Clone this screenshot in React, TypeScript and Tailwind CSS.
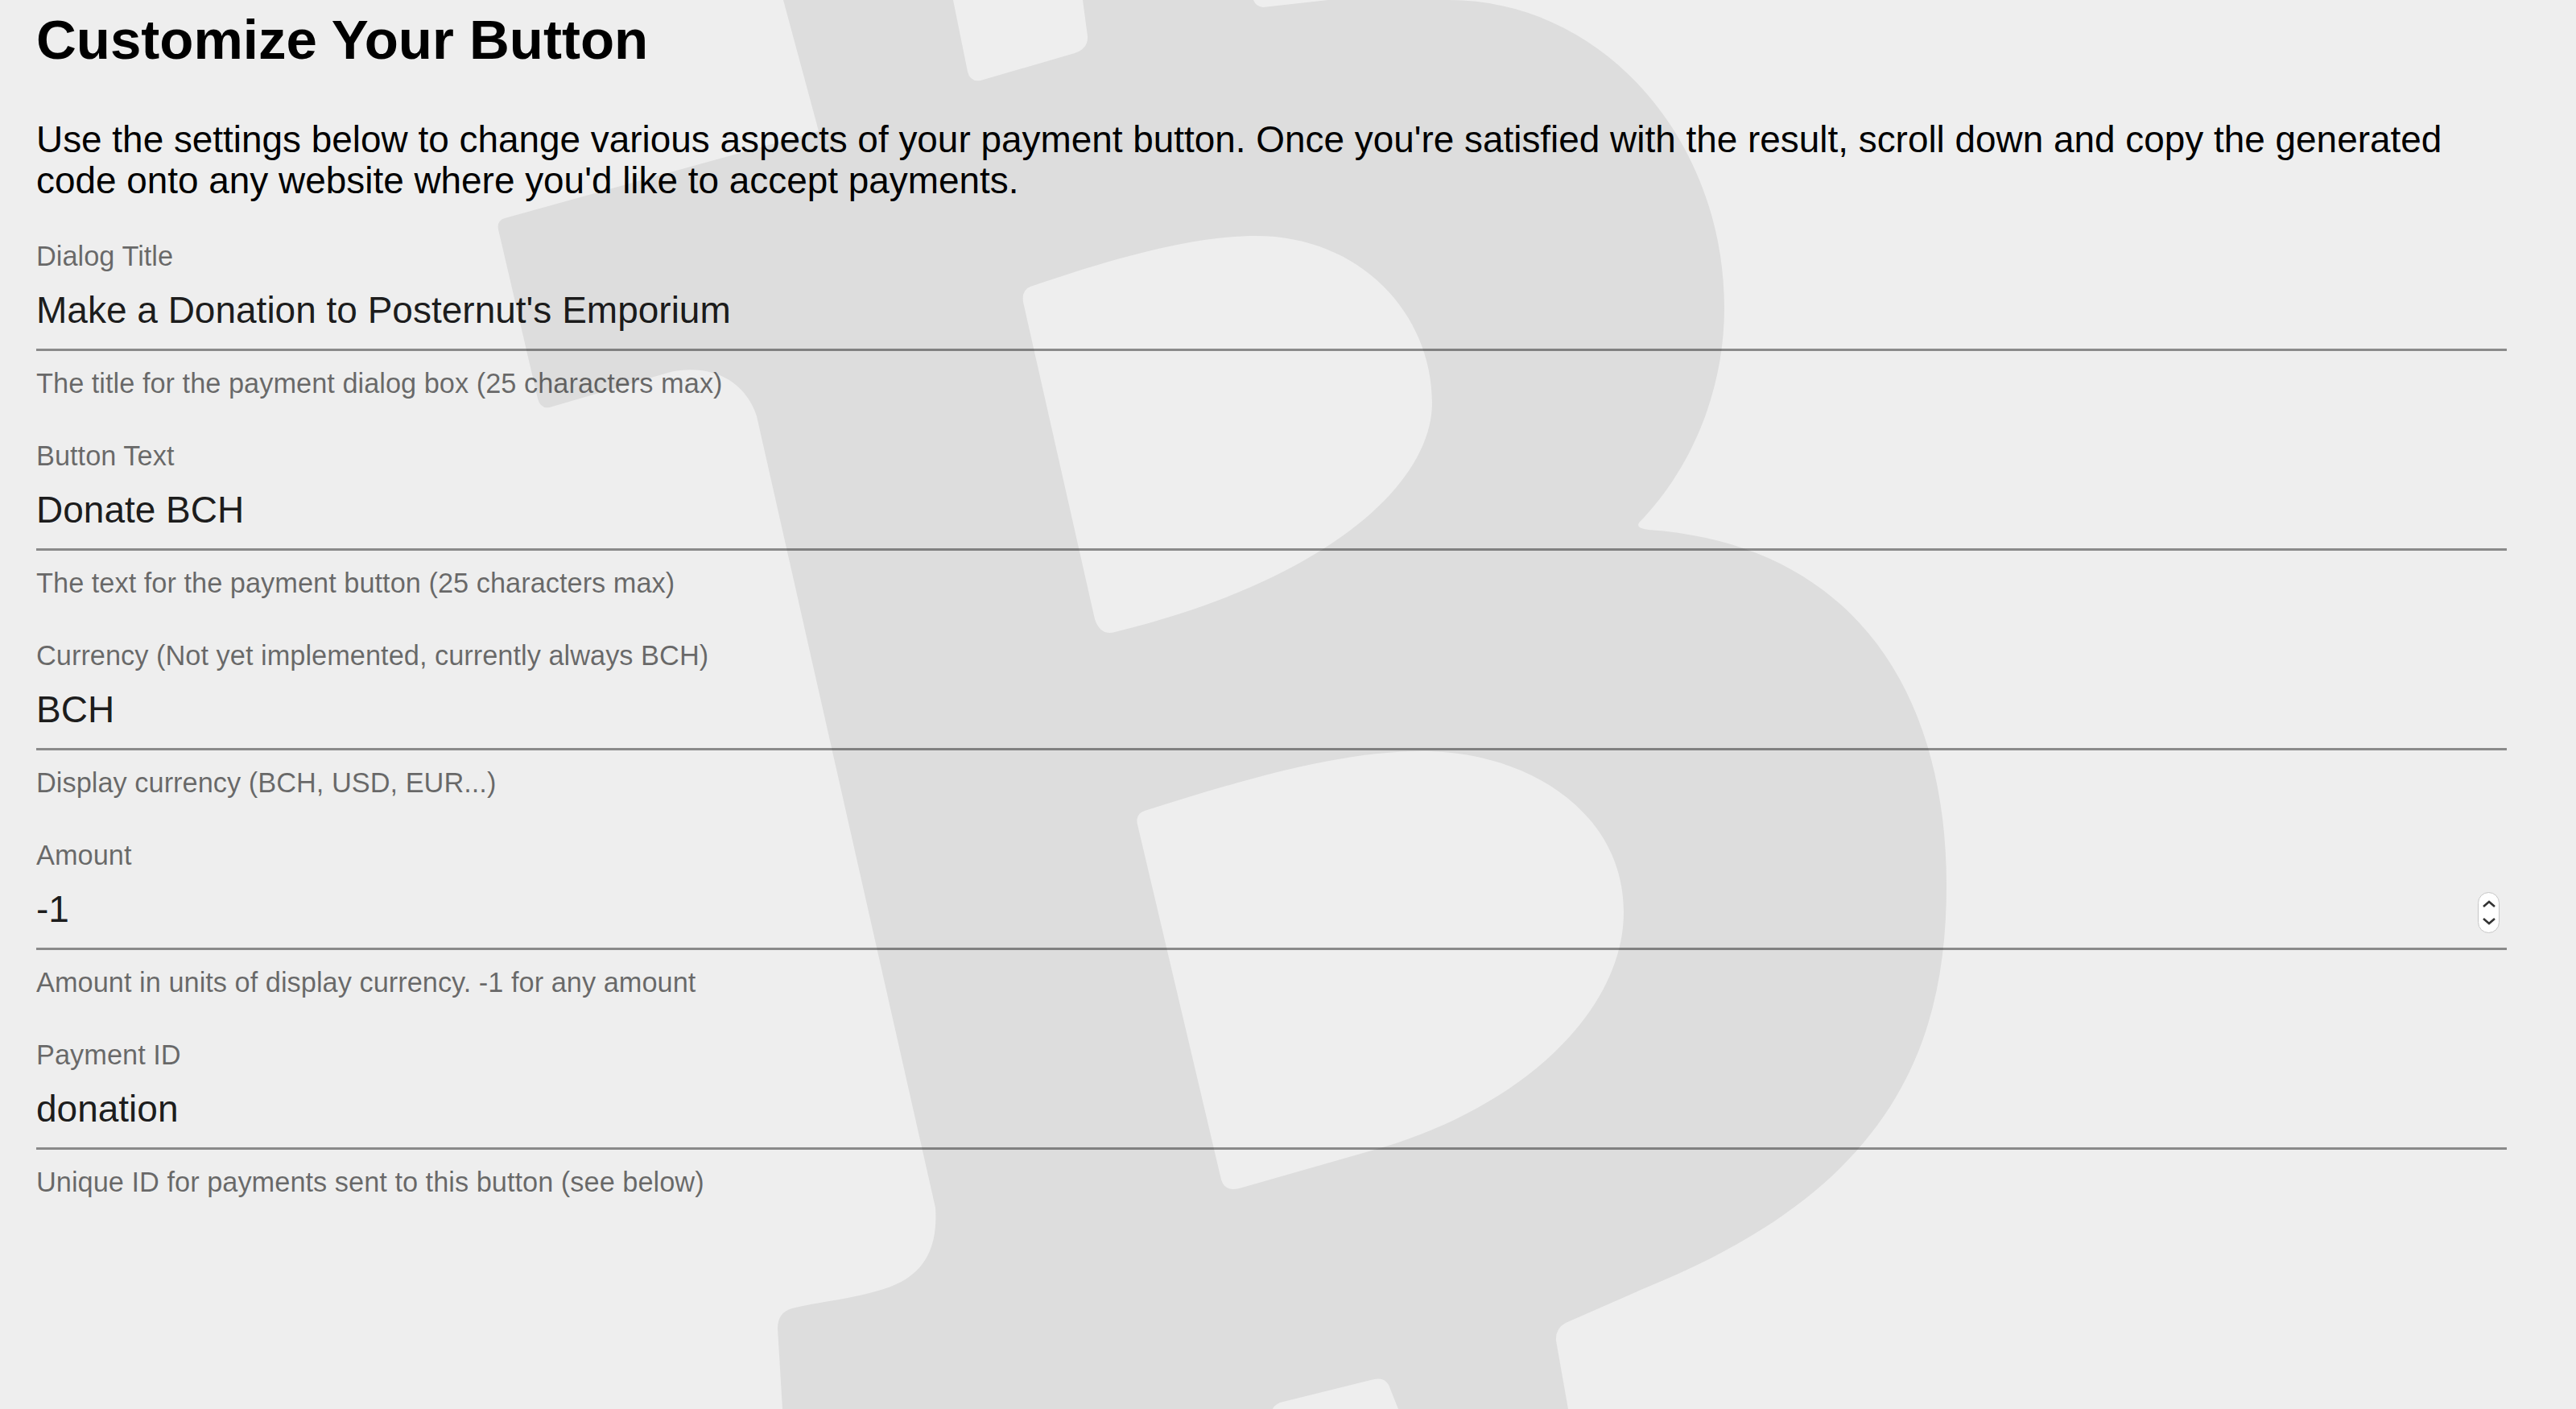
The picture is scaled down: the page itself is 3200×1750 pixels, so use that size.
const fields = [
  { label: "Dialog Title", value: "Make a Donation to Posternut's Emporium", help: "The title for the payment dialog box (25 characters max)" },
  { label: "Button Text", value: "Donate BCH", help: "The text for the payment button (25 characters max)" },
  { label: "Currency (Not yet implemented, currently always BCH)", value: "BCH", help: "Display currency (BCH, USD, EUR...)" },
  { label: "Amount", value: "-1", help: "Amount in units of display currency. -1 for any amount", spinner: true },
  { label: "Payment ID", value: "donation", help: "Unique ID for payments sent to this button (see below)" },
];

function Logo() {
  return (
    <svg className="absolute left-0 top-0 w-[3200px] h-[1750px]" viewBox="0 0 3200 1750" aria-hidden="true">
      <path
        fill="#dddddd"
        fillRule="evenodd"
        d="M973 0 L1017 163 L627 271 Q617 274 619 285 L668 495 Q672 510 686 505 L833 462 C880 452 925 470 940 517 L1162 1500 C1166 1560 1140 1590 1091 1603 C1050 1615 1010 1618 984 1625 Q966 1630 966 1650 L972 1750 L1581 1750 Q1582 1746 1590 1742 L1703 1714 Q1722 1708 1727 1725 L1737 1750 L1948 1750 L1933 1665 Q1932 1650 1945 1643 L2043 1600 C2340 1480 2418 1310 2418 1100 C2418 845 2290 675 2048 658 Q2030 656 2037 648 L2042 643 C2105 575 2142 480 2142 383 C2142 171 1989 0 1800 0 L1650 0 L1569 9 Q1560 8 1557 0 L1345 0 L1351 45 Q1352 60 1335 66 L1218 100 Q1205 102 1202 89 L1184 0 Z
        M1271 375 Q1269 360 1280 356 C1380 322 1480 293 1560 293 C1690 293 1779 390 1779 500 C1779 600 1650 720 1385 785 Q1367 790 1360 769 Z
        M1413 1024 Q1410 1011 1422 1007 C1540 970 1660 933 1767 933 C1900 933 2017 1010 2017 1133 C2017 1250 1900 1370 1718 1425 L1543 1475 Q1522 1482 1517 1465 Z"
      />
    </svg>
  );
}

function Spinner() {
  return (
    <div className="mt-[8px] flex h-[51px] w-[27px] flex-col items-center justify-center gap-[13px] rounded-[14px] border border-[#c6c6c6] bg-white">
      <svg width="16" height="9" viewBox="0 0 16 9" fill="none" stroke="#333" strokeWidth="2.6"><path d="M1 8 L8 2 L15 8" /></svg>
      <svg width="16" height="9" viewBox="0 0 16 9" fill="none" stroke="#333" strokeWidth="2.6"><path d="M1 1 L8 7 L15 1" /></svg>
    </div>
  );
}

export default function App() {
  return (
    <div className="relative h-[1750px] w-[3200px] overflow-hidden bg-[#eeeeee] font-['Liberation_Sans',Arial,sans-serif]">
      <Logo />
      <div className="relative pl-[45px] pr-[86px]">
        <h1 className="pt-[10px] text-[69px] leading-[80px] font-bold text-black">Customize Your Button</h1>
        <p className="mt-[58px] text-[45.9px] leading-[51px] text-black">
          Use the settings below to change various aspects of your payment button. Once you're satisfied with the result, scroll down and copy the generated code onto any website where you'd like to accept payments.
        </p>
        <div className="mt-[48px] flex flex-col gap-[50px]">
          {fields.map((f) => (
            <div key={f.label} className="flex flex-col">
              <div className="text-[34.4px] leading-[40px] text-[rgba(0,0,0,0.56)]">{f.label}</div>
              <div className="flex h-[98px] items-center justify-between border-b-[3px] border-[rgba(0,0,0,0.42)] pr-[9px] text-[46px] text-[rgba(0,0,0,0.9)]">
                <span>{f.value}</span>
                {f.spinner ? <Spinner /> : null}
              </div>
              <div className="mt-[20px] text-[34.4px] leading-[40px] text-[rgba(0,0,0,0.56)]">{f.help}</div>
            </div>
          ))}
        </div>
      </div>
    </div>
  );
}
